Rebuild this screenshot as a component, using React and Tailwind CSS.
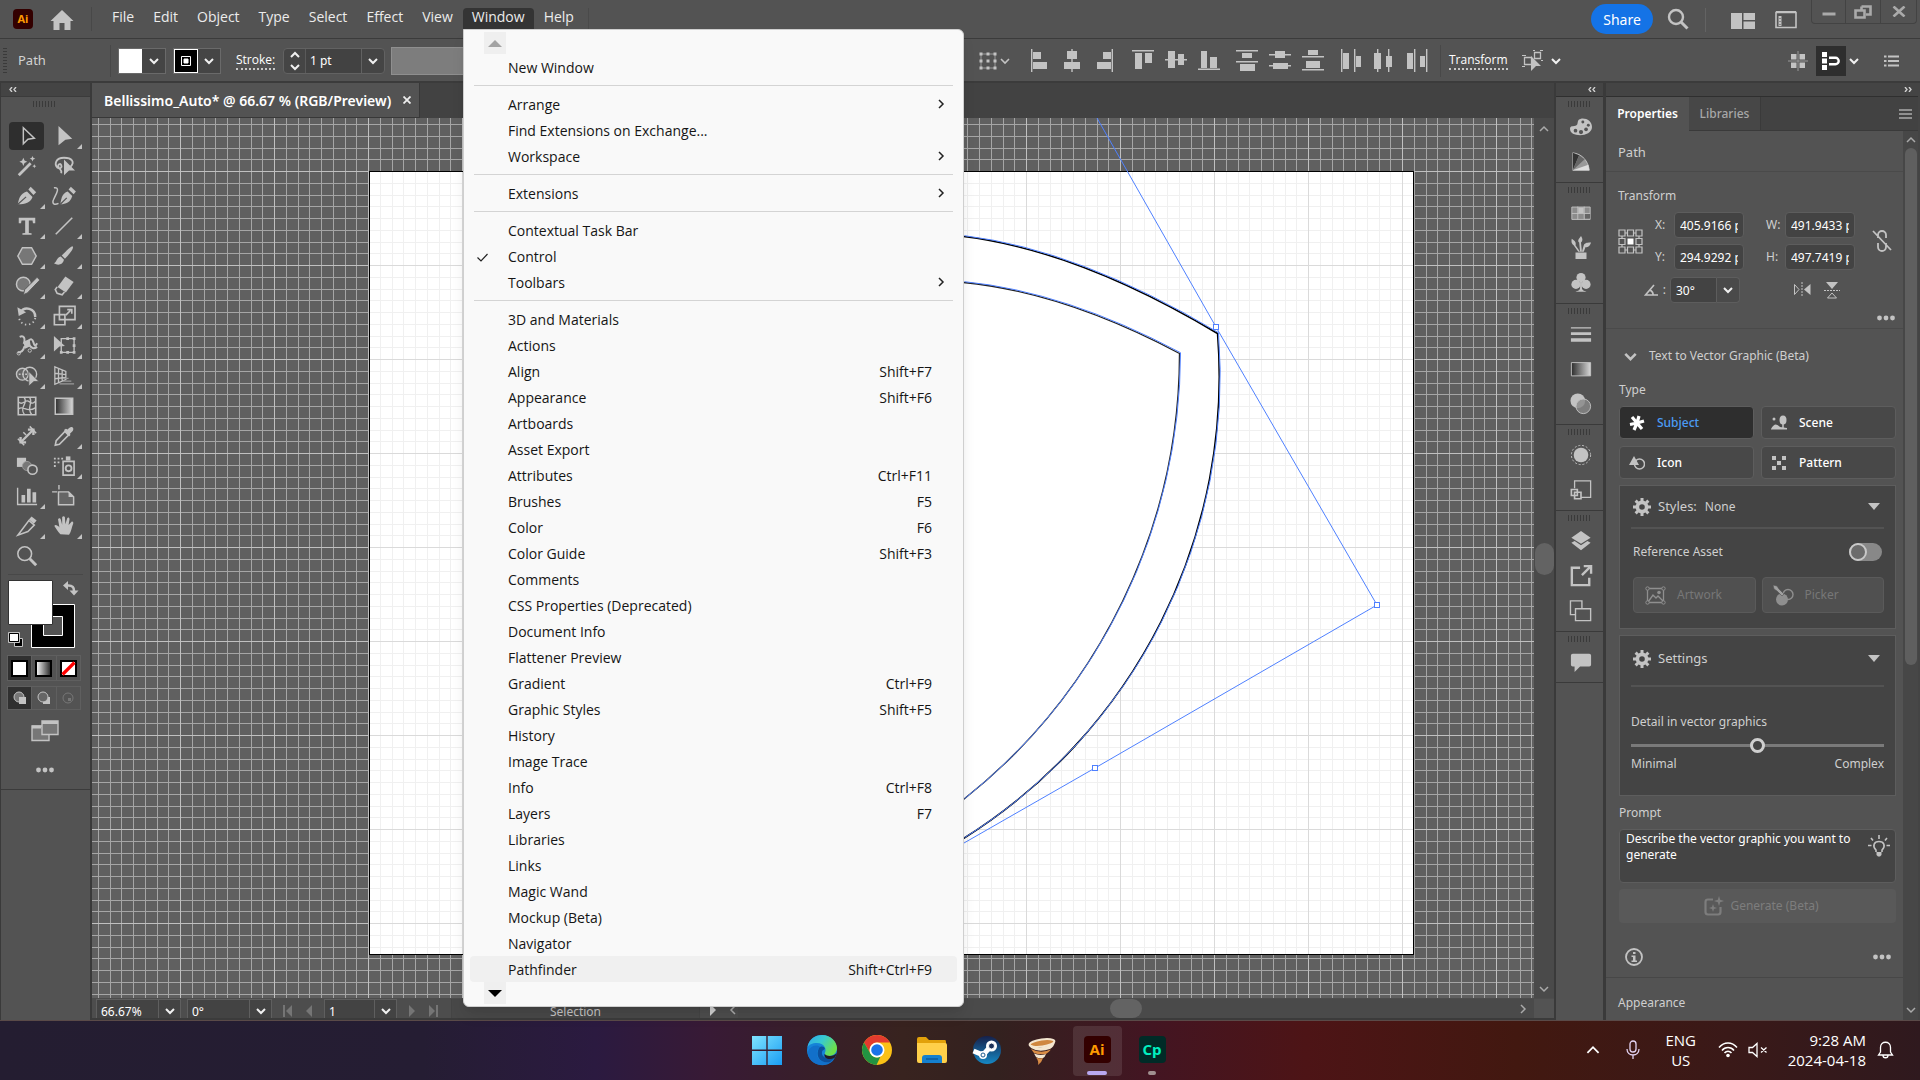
import React from "react";

const G = "#c3c3c3";

function Svg({ w = 24, h = w, vb, className = "", children, ...rest }) {
  return (
    <svg
      width={w}
      height={h}
      viewBox={vb || `0 0 ${w} ${h}`}
      fill="none"
      stroke="none"
      aria-hidden="true"
      className={`shrink-0 ${className}`}
      {...rest}
    >
      {children}
    </svg>
  );
}

function Chevron({ dir = "down", w = 10, color = "#f0f0f0", sw = 2 }) {
  const d = {
    down: "M1 3 L5 7 L9 3",
    up: "M1 7 L5 3 L9 7",
    right: "M3 1 L7 5 L3 9",
    left: "M7 1 L3 5 L7 9",
  }[dir];
  return (
    <Svg w={w} vb="0 0 10 10">
      <path d={d} stroke={color} strokeWidth={sw} />
    </Svg>
  );
}

function Dots({ className = "" }) {
  return (
    <Svg w={18} h={6} className={className}>
      <g fill={G}>
        <circle cx="2.5" cy="3" r="2.4" />
        <circle cx="9" cy="3" r="2.4" />
        <circle cx="15.5" cy="3" r="2.4" />
      </g>
    </Svg>
  );
}

function Grip() {
  return (
    <Svg w={24} h={6}>
      <path d="M1.5 0V6M4.5 0V6M7.5 0V6M10.5 0V6M13.5 0V6M16.5 0V6M19.5 0V6M22.5 0V6" stroke="#3a3a3a" />
    </Svg>
  );
}

function DoubleChevron({ right = false }) {
  return (
    <Svg w={8} h={5}>
      <path
        d={right ? "M1 0L3 2.5L1 5M5 0L7 2.5L5 5" : "M3 0L1 2.5L3 5M7 0L5 2.5L7 5"}
        stroke="#d0d0d0"
        strokeWidth="1.4"
      />
    </Svg>
  );
}

/* ---------- Title bar ---------- */

const MENUS = ["File", "Edit", "Object", "Type", "Select", "Effect", "View", "Window", "Help"];

function TitleBar() {
  return (
    <header className="flex h-[38px] shrink-0 items-stretch bg-[#535353]">
      <div className="flex items-center pl-[13px]">
        <div className="flex h-5 w-5 items-center justify-center rounded bg-[#330000] text-[11px] font-bold text-[#ff9a00]">
          Ai
        </div>
        <button aria-label="Home" className="ml-[17px]">
          <Svg w={24} h={22} className="mt-[2px]">
            <path d="M12 1 L23.5 12 H20.5 V21 H14.5 V14 H9.5 V21 H3.5 V12 H0.5Z" fill={G} />
          </Svg>
        </button>
        <div className="ml-[17px] h-6 w-px bg-[#484848]" />
      </div>
      <nav className="ml-[11px] flex items-stretch gap-px pt-2 pb-[9px]">
        {MENUS.map((m) => (
          <button
            key={m}
            className={
              m === "Window"
                ? "rounded-t bg-[#343434] px-[9px] pb-[3px] text-[14px] leading-4 text-[#ececec]"
                : "px-[9px] pb-[3px] text-[14px] leading-4 text-[#ececec]"
            }
          >
            {m}
          </button>
        ))}
        <div className="ml-[4px] w-px bg-[#4a4a4a]" />
      </nav>
      <div className="ml-auto flex">
        <button className="mt-1 h-[30px] w-[62px] rounded-full bg-[#1473e6] font-['Noto_Sans'] text-[14px] text-white">
          Share
        </button>
        <button aria-label="Search" className="ml-[14px]">
          <Svg w={22} vb="0 0 22 22">
            <circle cx="9" cy="9" r="7" stroke={G} strokeWidth="2.4" />
            <path d="M14 14 L20.5 20.5" stroke={G} strokeWidth="3" />
          </Svg>
        </button>
        <div className="mt-2 ml-[16px] h-6 w-px bg-[#636363]" />
        <button aria-label="Arrange documents" className="ml-[25px]">
          <Svg w={24} h={16} className="mt-[3px]">
            <path d="M0 0H11V16H0ZM12.5 0H24V7H12.5ZM12.5 8.5H24V16H12.5Z" fill={G} />
          </Svg>
        </button>
        <button aria-label="Workspace" className="ml-[20px]">
          <Svg w={22} h={18} className="mt-[2px]">
            <path d="M1 1.5H21V16.5H1Z" stroke={G} strokeWidth="1.6" />
            <path d="M1 1H21" stroke={G} strokeWidth="2" />
            <path d="M3 5H7V15H3Z" fill="#8a8a8a" />
            <path d="M5 5V15" stroke={G} strokeWidth="2" strokeDasharray="2 1" />
          </Svg>
        </button>
        <div className="mr-[3px] ml-[14px] flex h-6 rounded-b border border-t-0 border-[#434343]">
          <button aria-label="Minimize" className="flex w-[34px] items-center justify-center border-r border-[#434343] pt-1">
            <Svg w={14} h={4}>
              <path d="M0.5 0.5H13.5V3.5H0.5Z" fill="#aaa" />
            </Svg>
          </button>
          <button aria-label="Restore" className="flex w-[35px] items-center justify-center border-r border-[#434343]">
            <Svg w={18} h={14}>
              <path d="M7.5 1.5H16.5V9.5H12M1.5 5.5H10.5V12.5H1.5Z M7.5 1.5V5" stroke="#aaa" strokeWidth="2.6" />
            </Svg>
          </button>
          <button aria-label="Close" className="flex w-[35px] items-center justify-center">
            <Svg w={14} h={11}>
              <path d="M1.5 0.5L12.5 10.5M12.5 0.5L1.5 10.5" stroke="#aaa" strokeWidth="2.6" />
            </Svg>
          </button>
        </div>
      </div>
    </header>
  );
}

/* ---------- Control bar ---------- */

const ALIGN_ICONS = [
  ["Align left", "M1 0H2.4V23H1ZM3 3H11V10H3ZM3 13H17V20H3Z"],
  ["Align horizontal centre", "M8.3 0H9.7V23H8.3ZM4 2H14V10H4ZM1 13H17V20H1Z"],
  ["Align right", "M15.6 0H17V23H15.6ZM7 3H15V10H7ZM1 13H15V20H1Z"],
  ["Align top", "M-2 1H20V2.4H-2ZM1 4H8V20H1ZM11 4H18V14H11Z"],
  ["Align vertical centre", "M-2 10H20V11.4H-2ZM1 2H8V19H1ZM11 5H17V16H11Z"],
  ["Align bottom", "M-2 19.6H20V21H-2ZM1 2H7V19H1ZM10 8H17V19H10Z"],
  ["Distribute top", "M-2 1H20V2.4H-2ZM4 4H14V9H4ZM-2 12H20V13.4H-2ZM2 15H17V22H2Z"],
  ["Distribute vertical centre", "M-2 5H20V6.4H-2ZM4 2H14V9H4ZM-2 16H20V17.4H-2ZM2 14H17V20H2Z"],
  ["Distribute bottom", "M-2 7H20V8.4H-2ZM4 1H14V6H4ZM-2 20H20V21.4H-2ZM2 12H16V19H2Z"],
  ["Distribute left", "M0 0H1.4V23H0ZM2 4H8V20H2ZM13 0H14.4V23H13ZM15 7H20V18H15Z"],
  ["Distribute horizontal centre", "M3 0H4.4V23H3ZM0 4H7V20H0ZM14 0H15.4V23H14ZM12 7H18V18H12Z"],
  ["Distribute right", "M7 0H8.4V23H7ZM0 4H6V20H0ZM19 0H20.4V23H19ZM13 7H18V18H13Z"],
];

function ControlBar() {
  return (
    <div className="flex h-[44px] shrink-0 items-center border-y border-[#3b3b3b] bg-[#535353] pt-px text-[#e8e8e8]">
      <Svg w={4} h={26} className="ml-[3px]">
        <path d="M2 0V26" stroke="#3a3a3a" strokeWidth="4" strokeDasharray="1 2" />
      </Svg>
      <span className="ml-[11px] w-[92px] font-['Noto_Sans'] text-[13px] text-[#d2d2d2]">Path</span>
      <div className="h-8 w-px bg-[#484848]" />
      <div className="ml-[7px] flex h-[26px] w-[48px] border border-[#6a6a6a]">
        <button aria-label="Fill" className="w-[23px] bg-white" />
        <button aria-label="Fill options" className="flex flex-1 items-center justify-center bg-[#454545]">
          <Chevron />
        </button>
      </div>
      <div className="ml-[7px] flex h-[26px] w-[48px] border border-[#6a6a6a]">
        <button aria-label="Stroke colour" className="flex w-6 items-center justify-center border border-white bg-black">
          <Svg w={10}>
            <path d="M0.5 0.5H9.5V9.5H0.5ZM3 3H7V7H3Z" stroke="#fff" />
            <path d="M3 3H7V7H3Z" fill="#fff" />
          </Svg>
        </button>
        <button aria-label="Stroke options" className="flex flex-1 items-center justify-center bg-[#454545]">
          <Chevron />
        </button>
      </div>
      <label
        htmlFor="stroke"
        className="ml-[15px] w-[39px] border-b-2 border-dotted border-[#c8c8c8] text-[12px] leading-4 font-medium text-white"
      >
        Stroke:
      </label>
      <div className="ml-2 flex h-[26px] w-[102px] rounded-sm border border-[#626262] bg-[#454545]">
        <div className="flex w-[22px] flex-col items-center justify-center gap-0.5 border-r border-[#5a5a5a]">
          <Chevron dir="up" />
          <Chevron />
        </div>
        <input
          id="stroke"
          defaultValue="1 pt"
          className="w-[56px] border-r border-[#626262] bg-[#424242] pl-1 font-['Noto_Sans'] text-[12px] text-white outline-none"
        />
        <button aria-label="Stroke weights" className="flex flex-1 items-center justify-center">
          <Chevron />
        </button>
      </div>
      <div className="ml-[6px] h-[28px] w-[130px] border border-[#8f8f8f] bg-[#7d7d7d]" />
      <button aria-label="Shape properties" className="ml-[457px] flex items-center gap-0.5">
        <Svg w={20} h={20}>
          <path d="M3 3H17V17H3Z" stroke="#999" />
          <path d="M1.5 1.5h3v3h-3zM8.5 1.5h3v3h-3zM15.5 1.5h3v3h-3zM1.5 8.5h3v3h-3zM8.5 8.5h3v3h-3zM15.5 8.5h3v3h-3zM1.5 15.5h3v3h-3zM8.5 15.5h3v3h-3zM15.5 15.5h3v3h-3z" fill={G} />
        </Svg>
        <Chevron color={G} sw={1.6} />
      </button>
      <div className="ml-[20px] flex">
        {ALIGN_ICONS.map(([label, d], i) => (
          <button key={label} aria-label={label} className={i === 9 ? "ml-[19px]" : i % 3 === 0 && i > 0 ? "ml-[20px]" : i > 0 ? "ml-[15px]" : ""}>
            <Svg w={18} h={23} overflow="visible">
              <path d={d} fill={G} />
            </Svg>
          </button>
        ))}
      </div>
      <div className="ml-[15px] h-8 w-px bg-[#484848]" />
      <button className="ml-2 border-b-2 border-dotted border-[#c8c8c8] text-[12px] leading-4 font-medium text-white">
        Transform
      </button>
      <button aria-label="Select similar" className="ml-[14px] flex items-center gap-[7px]">
        <Svg w={22} h={22}>
          <path d="M2.5 7.5H9.5V14.5H2.5Z M12.5 2.5H18.5V8.5H12.5Z" stroke={G} strokeWidth="1.3" />
          <path d="M0 5.5h4M0 16.5h3M11 .5h2M18 .5h3M19 10.5h2" stroke={G} />
          <path d="M9 6L19 16L14 16L9 21Z" fill={G} />
        </Svg>
        <Chevron />
      </button>
      <div className="ml-auto flex items-center">
        <button aria-label="Snap to grid">
          <Svg w={20}>
            <path d="M3 3H8.5V8.5H3ZM11.5 3H17V8.5H11.5ZM3 11.5H8.5V17H3ZM11.5 11.5H17V17H11.5Z" fill={G} />
            <path d="M10 0V20M0 10H20" stroke="#999" />
          </Svg>
        </button>
        <button aria-label="Snap to point" className="ml-2 flex h-[30px] w-[30px] items-center justify-center bg-[#2e2e2e]">
          <Svg w={20} h={20}>
            <path d="M1 1H6V6H1ZM1 7.5H6V12.5H1ZM1 14H6V19H1Z" fill="#fff" />
            <path d="M8 6.8H14.5A3.2 3.2 0 0 1 14.5 13.2H8" stroke="#fff" strokeWidth="2.4" />
          </Svg>
        </button>
        <span className="ml-[3px]">
          <Chevron />
        </span>
        <button aria-label="Control menu" className="mr-[21px] ml-[25px]">
          <Svg w={15} h={12}>
            <path d="M4 1.5H15M4 6H15M4 10.5H15M0 1.5H2.5M0 6H2.5M0 10.5H2.5" stroke={G} strokeWidth="2" />
          </Svg>
        </button>
      </div>
    </div>
  );
}

/* ---------- Toolbar ---------- */

const TOOLS = [
  ["Selection", false, <path d="M8 3 L20 14.5 L13 15.5 L8 20.5Z" stroke={G} strokeWidth="1.6" />],
  ["Direct selection", true, <path d="M6 1 L21 15 L13.5 16 L6 22Z" fill={G} />],
  ["Magic wand", false, <><path d="M3 22L16 9" stroke={G} strokeWidth="3" /><path d="M8 3l1.3 3 3 1.3-3 1.3L8 12 6.700 8.600 3.700 7.300 6.700 6zM18 1l.9 2.100 2.100.9-2.100.9L18 7l-.9-2.100L15 4l2.100-.9zM20 10l.7 1.500 1.500.7-1.500.7L20 14.500l-.7-1.600-1.500-.7 1.500-.7z" fill={G} /></>],
  ["Lasso", false, <><path d="M5 14C1 10 3 3 12 3s12 5 7 10M5 14c3 2 5-1 4-3s-4-1-3 2 4 3 3 7" stroke={G} strokeWidth="2" /><path d="M12 5L24 17L17.500 17L12 22Z" fill={G} /></>],
  ["Pen", true, <><path d="M2 21C3 14 5 9 12 7L18 13C16 19 10 21 2 21Z" fill={G} /><path d="M13.500 5L16 2L22 8L19 11Z" fill={G} /><path d="M2 21L11 13" stroke="#535353" strokeWidth="1.3" /></>],
  ["Curvature", false, <><path d="M8 21C9 14 10 9 16 7L21 12C19 19 14 21 8 21Z" fill={G} /><path d="M17 5L19.500 2L25 7L22.500 10Z" fill={G} /><path d="M8 21L15 14" stroke="#535353" strokeWidth="1.3" /><path d="M1 3C8 2 4 9 1 15S2 22 6 20" stroke={G} strokeWidth="1.6" /></>],
  ["Type", true, <path d="M3 3H21V9H18.500L18 6H14V19.500L17 20V21.500H7V20L10 19.500V6H6L5.500 9H3Z" fill={G} />],
  ["Line segment", true, <path d="M3 21L21 3" stroke={G} strokeWidth="1.8" />],
  ["Polygon", true, <path d="M2 12L7 3H17L22 12L17 21H7Z" stroke={G} strokeWidth="1.600" fill="#777" />],
  ["Paintbrush", true, <><path d="M21.500 1.500C23 3 20 8 13 15L9.500 11.500C16 5 20 1 21.500 1.500Z" fill={G} /><path d="M8.500 12.500L12 16C11 21 6 23 1 20C4 19 4 13 8.500 12.500Z" fill={G} /></>],
  ["Shaper", true, <><circle cx="8" cy="10" r="7.500" stroke={G} strokeWidth="1.600" fill="#777" /><path d="M8 21.500L9.500 16L23 2.500L26 5.500L12.500 19.500Z" fill={G} stroke="#535353" strokeWidth="1" /></>],
  ["Eraser", true, <><path d="M13.500 1.500L22.500 7.500L14 19L5 13Z" fill={G} /><path d="M4.500 13L2.500 16L4.500 20L10 21.500L12.500 18.500" stroke={G} strokeWidth="1.800" /></>],
  ["Rotate", true, <><path d="M5 8C9 1 21 3 21 13" stroke={G} strokeWidth="2.600" /><path d="M1.500 2.500L3 12L11 8Z" fill={G} /><path d="M21 14C20 23 5 25 3 13" stroke={G} strokeWidth="2" strokeDasharray="1.500 3" /></>],
  ["Scale", true, <><path d="M7 1.500H24V16H7Z" stroke={G} strokeWidth="1.800" /><path d="M1.500 10.500H13V21.500H1.500Z" stroke={G} strokeWidth="1.800" /><path d="M14 11L19 6M15.500 5H20.500V9.500" stroke={G} strokeWidth="1.800" /></>],
  ["Width", true, <><path d="M4 2C9 0 10 4 9 8L14 6C16 4 18 4 19 8S21 13 23 9M2 19C6 19 8 17 9 13L14 11C17 14 19 16 23 13" stroke={G} strokeWidth="2.200" /><path d="M8 8L15 5.500L16 12L10 15Z" fill={G} /><circle cx="3" cy="20" r="1.800" stroke={G} /><circle cx="15" cy="17" r="1.800" stroke={G} /></>],
  ["Free transform", true, <><path d="M9 4H23V19H9Z" stroke={G} strokeWidth="1.500" /><path d="M14.500 2.500h3v3h-3zM21.500 2.500h3v3h-3zM21.500 10h3v3h-3zM21.500 17.500h3v3h-3zM14.500 17.500h3v3h-3zM7.500 17.500h3v3h-3z" fill={G} /><path d="M1 1L13 12L7 12.500L1 18Z" fill={G} /></>],
  ["Shape builder", true, <><circle cx="7" cy="10" r="6.500" stroke={G} strokeWidth="1.500" fill="#666" /><circle cx="15" cy="10" r="7.500" stroke={G} strokeWidth="1.500" /><path d="M3 10H17" stroke={G} strokeWidth="1.600" strokeDasharray="2 1.500" /><path d="M14 7L25 18L19.500 18L14 23Z" fill={G} stroke="#535353" strokeWidth=".8" /></>],
  ["Perspective grid", true, <><path d="M2 2L14 7V16L2 21Z M6 4V19M10 6V17M2 9L14 10.500M2 15L14 13.500" stroke={G} strokeWidth="1.400" /><path d="M11 14.500H17M11 17.500H20M7 20.500H23" stroke="#999" strokeWidth="1.400" /></>],
  ["Mesh", false, <><path d="M2.500 2.500H21.500V21.500H2.500Z" stroke={G} strokeWidth="1.800" /><path d="M3 8C8 12 10 4 14 7S19 9 21 7M3 15C8 11 12 20 21 14M9 3C14 9 3 13 9 21M15 3C19 9 11 14 17 21" stroke={G} strokeWidth="1.500" /></>],
  ["Gradient", false, <path d="M2.500 3.500H21.500V21H2.500Z" stroke={G} strokeWidth="1.600" fill="url(#toolGradient)" />],
  ["Measure", false, <><path d="M6 18L18 6" stroke={G} strokeWidth="2.600" /><path d="M13 5L19 5L19 11M5 13V19H11" stroke={G} strokeWidth="2.600" /><path d="M15 1.500L22 9M2 15L9 22M8 8L11 11" stroke={G} strokeWidth="1.600" /></>],
  ["Eyedropper", true, <><path d="M13 7L17 11L7 21L2.500 22L3.500 17Z" stroke={G} strokeWidth="1.800" /><path d="M12 5.500L14 4L16 5C19 0 24 2 21.500 6.500L18.500 9.500L19 11L17.500 12.500Z" fill={G} /></>],
  ["Blend", false, <><path d="M1 3H11V13H1Z" fill={G} /><circle cx="12" cy="12" r="5" fill="#777" stroke="#999" /><circle cx="18" cy="16" r="5" stroke={G} strokeWidth="1.800" fill="#535353" /></>],
  ["Symbol sprayer", true, <><path d="M11 7H23V22H11Z" stroke={G} strokeWidth="1.800" /><path d="M14 1.500H19V6H14Z" fill={G} /><circle cx="17" cy="14.500" r="3.200" stroke={G} strokeWidth="2" /><path d="M1 4H12M1 8H9M1 12H5" stroke={G} strokeWidth="2" strokeDasharray="2 2" /></>],
  ["Column graph", true, <path d="M1 3H2.500V20.500H23V22H1ZM6 11H10V19H6ZM12 4H16V19H12ZM18 8H22V19H18Z" fill={G} />],
  ["Artboard", false, <><path d="M6 7.500H17L22.500 13V21.500H6Z" stroke={G} strokeWidth="1.600" fill="#666" /><path d="M-1 7.500H4.500M6.500 0V5" stroke={G} strokeWidth="1.500" /><path d="M17 7.500V13H22.500Z" fill={G} /></>],
  ["Slice", true, <><path d="M2 22L14 6L20 11L13 18Z" stroke={G} strokeWidth="1.700" /><path d="M14 5L17 1.500L22.500 6L19.500 9.500Z" fill={G} /></>],
  ["Hand", true, <><path d="M8 21C5 18 3 14 1.500 12C2 10 5 11 7 13.500L5.500 4.500C6.500 3 8 3.500 8.500 5L10 10.500V2.500C10.500 1 12.500 1 13 2.500L13.500 10L15.500 3.500C16.500 2 18 3 18 4.500L17 11L20 7.500C21.500 6.500 22.500 8 22 9.500C20.500 13 20 18 17.500 21.500Z" fill={G} /></>],
  ["Zoom", false, <><circle cx="9.500" cy="9.500" r="7.500" stroke={G} strokeWidth="1.700" /><path d="M15 15L22 22" stroke={G} strokeWidth="3.200" /></>],
];

function Toolbar() {
  return (
    <aside className="flex w-[92px] shrink-0 flex-col border-x border-r-2 border-[#3a3a3a] bg-[#535353]">
      <div className="flex h-[14px] shrink-0 items-center border-b border-[#3b3b3b] bg-[#444] pl-2">
        <DoubleChevron />
      </div>
      <div className="flex h-[24px] shrink-0 justify-center pt-1 pr-1">
        <Grip />
      </div>
      <svg width="0" height="0" className="absolute" aria-hidden="true">
        <defs>
          <linearGradient id="toolGradient">
            <stop offset="0" stopColor="#2c2c2c" />
            <stop offset="1" stopColor="#d8d8d8" />
          </linearGradient>
        </defs>
      </svg>
      <div className="mx-[7px] grid grid-cols-2 border-b border-[#484848] pb-[3px]">
        {TOOLS.map(([label, more, art], i) => (
          <button key={label} aria-label={label} className="relative flex h-[30px] items-center justify-center">
            <span
              className={
                i === 0
                  ? "flex h-[28px] w-[35px] items-center justify-center rounded-sm bg-[#2e2e2e]"
                  : "flex h-[28px] w-[35px] items-center justify-center"
              }
            >
              <Svg w={22} vb="0 0 24 24" overflow="visible">
                {art}
              </Svg>
            </span>
            {more && (
              <Svg w={5} className="absolute right-[1px] bottom-[2px]">
                <path d="M5 0V5H0Z" fill={G} />
              </Svg>
            )}
          </button>
        ))}
      </div>
      <button aria-label="Fill and stroke" className="mx-[7px] mt-[5px]">
        <Svg w={74} h={68}>
          <path d="M23.500 24.500H66.500V67.500H23.500Z" fill="#000" stroke="#fff" />
          <path d="M35.500 36.500H54.500V55.500H35.500Z" fill="#535353" stroke="#fff" />
          <path d="M0.500 0.500H44.500V44.500H0.500Z" fill="#fff" stroke="#333" />
          <path d="M59 5.500C65 5 66 8 66 11" stroke={G} strokeWidth="2.500" />
          <path d="M60 1L55 5.500L60 10ZM61.500 10.500H70.500L66 15.500Z" fill={G} />
          <path d="M6.500 58.500H14.500V66.500H6.500Z" fill="#000" stroke={G} />
          <path d="M1.500 53.500H10.500V61.500H1.500Z" fill="#fff" stroke="#000" />
          <path d="M0.500 52.500H11.500V62.500H0.500Z" stroke={G} />
        </Svg>
      </button>
      <div className="ml-[6px] mt-[7px] flex h-[26px] w-[74px] border border-[#5f5f5f]">
        {["Color", "Gradient", "None"].map((t, i) => (
          <button
            key={t}
            aria-label={t}
            className={
              i === 0
                ? "flex flex-1 items-center justify-center bg-[#303030]"
                : "flex flex-1 items-center justify-center border-l border-[#5f5f5f]"
            }
          >
            <Svg w={17}>
              <path
                d="M1 1H16V16H1Z"
                fill={i === 1 ? "url(#fillGradient)" : "#fff"}
                stroke="#000"
                strokeWidth="2"
              />
              {i === 1 && (
                <defs>
                  <linearGradient id="fillGradient">
                    <stop offset="0" stopColor="#fff" />
                    <stop offset="1" stopColor="#222" />
                  </linearGradient>
                </defs>
              )}
              {i === 2 && <path d="M2.500 14.500L14.500 2.500" stroke="#f00" strokeWidth="3.200" />}
            </Svg>
          </button>
        ))}
      </div>
      <div className="ml-[6px] mt-[5px] flex h-6 w-[74px] border border-[#5f5f5f]">
        {["Draw normal", "Draw behind", "Draw inside"].map((t, i) => (
          <button
            key={t}
            aria-label={t}
            className={
              i === 0
                ? "flex flex-1 items-center justify-center bg-[#303030]"
                : "flex flex-1 items-center justify-center border-l border-[#5f5f5f]"
            }
          >
            <Svg w={16}>
              {i === 0 && <><circle cx="7" cy="7" r="5" stroke={G} fill="#777" /><path d="M7 7H14V14H7Z" fill={G} /></>}
              {i === 1 && <><path d="M7 7H14V14H7Z" fill={G} /><circle cx="7" cy="7" r="5" stroke={G} fill="#666" /></>}
              {i === 2 && <><circle cx="8" cy="8" r="5" stroke="#777" /><path d="M8 8H11V11H8Z" fill="#777" /></>}
            </Svg>
          </button>
        ))}
      </div>
      <button aria-label="Screen mode" className="mt-[10px] mr-px self-center">
        <Svg w={28} h={22}>
          <path d="M1 6H18V20.500H1Z" fill="#777" stroke={G} strokeWidth="1.400" />
          <path d="M11 1H27V14.500H11Z" fill="#777" stroke={G} strokeWidth="1.400" />
          <path d="M11 2.500H27M1 7H10" stroke={G} strokeWidth="3" />
        </Svg>
      </button>
      <button aria-label="Edit toolbar" className="flex justify-center pt-[25px] pr-0.5 pb-[16px]">
        <Dots />
      </button>
      <div className="border-t border-[#3b3b3b]" />
    </aside>
  );
}

/* ---------- Document ---------- */

const STEPS = [12, 24, 35, 47, 59, 71, 82];

function GridPattern({ id, minor, major }) {
  return (
    <pattern id={id} x="368" y="171" width="94" height="94" patternUnits="userSpaceOnUse">
      {STEPS.map((s) => (
        <g key={s} fill={minor}>
          <rect x={s} y="0" width="1" height="94" />
          <rect x="0" y={s} width="94" height="1" />
        </g>
      ))}
      <rect x="0" y="0" width="1" height="94" fill={major} />
      <rect x="0" y="0" width="94" height="1" fill={major} />
    </pattern>
  );
}

const OUTER = "M964 236Q1079 250 1218 333A545 545 0 0 1 964 838";
const INNER = "M964 282Q1065 292 1180 353A569 569 0 0 1 964 799";

function Canvas() {
  return (
    <div className="min-w-0 flex-1 overflow-hidden bg-[#606060]">
      <svg width="100%" height="100%" aria-label="Artboard" className="block">
        <defs>
          <GridPattern id="gridDark" minor="#a6a6a6" major="#c0c0c0" />
          <GridPattern id="gridLight" minor="#f0f0f0" major="#dadada" />
        </defs>
        <g transform="translate(-92 -118)">
          <rect x="92" y="118" width="3000" height="2000" fill="url(#gridDark)" />
          <rect x="369.500" y="171.500" width="1044" height="783" fill="#fff" stroke="#000" />
          <rect x="370" y="172" width="1043" height="782" fill="url(#gridLight)" />
          <path d={OUTER + "L700 838L700 236Z"} fill="#fff" />
          <g fill="none">
            <g transform="translate(-0.500 0.500)">
              <path d={OUTER} stroke="#000" strokeWidth="1.500" />
              <path d={INNER} stroke="#222" strokeWidth="1.300" />
            </g>
            <g transform="translate(0.500 -0.300)" stroke="#4f80ff">
              <path d={OUTER} />
              <path d={INNER} />
            </g>
            <path d="M1097 118L1216 327L1377 605L1095 768L964 843" stroke="#4f80ff" />
          </g>
          <g fill="#fff" stroke="#4f80ff">
            <rect x="1213.500" y="324.500" width="5" height="5" />
            <rect x="1374.500" y="602.500" width="5" height="5" />
            <rect x="1092.500" y="765.500" width="5" height="5" />
          </g>
        </g>
      </svg>
    </div>
  );
}

function StatusField({ label, value, inputClass }) {
  return (
    <div className="flex h-full items-center border border-b-0 border-[#5f5f5f] bg-[#434343]">
      <input aria-label={label} defaultValue={value} className={inputClass} />
      <button aria-label={`${label} options`} className="flex h-full w-[22px] items-center justify-center border-l border-[#5f5f5f] pt-1">
        <Chevron />
      </button>
    </div>
  );
}

function Tri({ flip = false, bar = false, color = "#757575" }) {
  return (
    <Svg w={12} h={12} className={flip ? "rotate-180" : ""}>
      <path d="M2 0L8 6L2 12Z" fill={color} />
      {bar && <path d="M10 0V12" stroke={color} strokeWidth="2" />}
    </Svg>
  );
}

function StatusBar() {
  return (
    <div className="flex h-[22px] shrink-0 items-center border-b-2 border-[#3b3b3b] bg-[#4d4d4d] pt-px pl-1 font-['Noto_Sans'] text-[12px] text-white">
      <StatusField label="Zoom" value="66.67%" inputClass="h-full w-[61px] pt-1 pl-1 outline-none" />
      <div className="ml-[6px] h-full">
        <StatusField label="Rotation" value="0°" inputClass="h-full w-[61px] pt-1 pl-1 outline-none" />
      </div>
      <div className="ml-[10px] flex w-[42px] gap-2 pt-1">
        <Tri flip bar />
        <Tri flip />
      </div>
      <StatusField label="Artboard" value="1" inputClass="h-full w-[49px] pt-1 pl-1 outline-none" />
      <div className="ml-[10px] flex gap-2 pt-1 pr-3">
        <Tri />
        <Tri bar />
      </div>
      <div className="flex h-full w-[249px] items-center justify-center border-x border-[#444] bg-[#484848] pt-1.5 text-[12px] text-[#c4c4c4]">
        Selection
      </div>
      <div className="ml-[8px] flex items-center gap-[8px] pt-0.5">
        <Tri color="#d0d0d0" />
        <Chevron dir="left" color="#aaa" sw={1.5} />
      </div>
      <div className="flex h-full flex-1 items-center bg-[#4a4a4a]">
        <div className="ml-[372px] h-[19px] w-8 rounded-full bg-[#636363]" />
        <span className="mr-[6px] ml-auto">
          <Chevron dir="right" color="#aaa" sw={1.5} />
        </span>
      </div>
      <div className="h-full w-5 bg-[#535353]" />
    </div>
  );
}

function DocumentArea() {
  return (
    <main className="flex min-w-0 flex-1 flex-col">
      <div className="flex h-[35px] shrink-0 bg-[#424242]">
        <div className="flex items-center border-r border-b border-[#383838] bg-[#535353] pr-2 pl-3">
          <span className="font-['Noto_Sans'] text-[14px] font-semibold text-white">
            Bellissimo_Auto* @ 66.67 % (RGB/Preview)
          </span>
          <button aria-label="Close document" className="ml-3">
            <Svg w={8}>
              <path d="M0.500 0.500L7.500 7.500M7.500 0.500L0.500 7.500" stroke="#eee" strokeWidth="1.800" />
            </Svg>
          </button>
        </div>
      </div>
      <div className="flex min-h-0 flex-1">
        <Canvas />
        <div className="flex w-[20px] shrink-0 flex-col items-center justify-between bg-[#4a4a4a] pt-[6px] pb-[4px]">
          <Chevron dir="up" color="#aaa" sw={1.5} />
          <div className="h-8 w-[19px] rounded-full bg-[#636363]" />
          <Chevron color="#aaa" sw={1.5} />
        </div>
      </div>
      <StatusBar />
    </main>
  );
}

/* ---------- Dock ---------- */

const DOCK = [
  [
    ["Color", <><path d="M12 3C18 2 24 6 24 12C24 18 17 21 11 21C5 21 0 19 0 14C0 9 6 13 8 9C9 6 8 4 12 3Z" fill={G} /><g fill="#535353"><circle cx="6" cy="16" r="2" /><circle cx="12" cy="17.500" r="2.300" /><circle cx="17.500" cy="14.500" r="2" /><circle cx="20" cy="10" r="1.600" /><circle cx="14" cy="6.500" r="1.600" /></g></>],
    ["Color guide", <><path d="M3 2C13 3 20 11 21 21H3Z" fill="#999" stroke={G} /><path d="M3 21V2L10 4.500Z" fill="#333" /><path d="M3 21L10 4.500L16 9Z" fill="#666" /><path d="M3 21L20 15L21 21Z" fill="#ddd" /></>],
  ],
  [
    ["Swatches", <><path d="M2 5.500H22V19H2Z" fill="#8c8c8c" stroke={G} /><path d="M9 6H15V12H9Z" fill={G} /><path d="M16 12.500H22V18H16Z" fill="#666" /><path d="M8.500 5V19M15.500 5V19M2 12.500H22" stroke={G} /></>],
    ["Brushes", <><path d="M6 17H18V24H6ZM9 16L4 9C2 8 1 5 2 2C5 4 7 6 6 9L11 16ZM11 16L10 6C7 4 11 1 12 -1C14 2 14 4 12 6L13 16ZM13 16L15 9C16 6 20 6 23 6C22 9 20 12 17 11L15 16Z" fill={G} /></>],
    ["Symbols", <><circle cx="12" cy="6" r="5" fill={G} /><circle cx="6.500" cy="13.500" r="5" fill={G} /><circle cx="17.500" cy="13.500" r="5" fill={G} /><path d="M11 8H13V17C13 20 15 20.500 18 21.500H6C9 20.500 11 20 11 17Z" fill={G} /></>],
  ],
  [
    ["Stroke", <path d="M1 4.500H23V6H1ZM1 10H23V13H1ZM1 16.500H23V20.500H1Z" fill={G} />],
    ["Gradient", <path d="M1.500 5H22.500V19.500H1.500Z" fill="url(#toolGradient)" stroke={G} />],
    ["Transparency", <><circle cx="8.500" cy="8.500" r="8" fill={G} /><circle cx="14.500" cy="14.500" r="8" fill="#888" fillOpacity=".8" stroke={G} /></>],
  ],
  [
    ["Appearance", <><circle cx="12" cy="12" r="8" fill={G} /><circle cx="12" cy="12" r="10.500" stroke={G} strokeDasharray="2.200 2" /></>],
    ["Graphic styles", <><path d="M5 10V2H22.500V20H12" stroke={G} strokeWidth="1.400" /><path d="M1.500 11.500H8V18H1.500ZM5 14.500H12V21.500H5Z" stroke={G} strokeWidth="1.800" /></>],
  ],
  [
    ["Layers", <path d="M12 1L22.500 8.500L12 15L1.500 8.500ZM1.500 14L5 12L12 16.500L19 12L22.500 14L12 22Z" fill={G} />],
    ["Asset export", <><path d="M11 3H2V22H21V14" stroke={G} strokeWidth="2.600" /><path d="M13 11L22 2M15 1.200H23V9.500" stroke={G} strokeWidth="2.600" /></>],
    ["Artboards", <><path d="M0.500 1H13V16H0.500Z" stroke={G} strokeWidth="1.500" /><path d="M6 9.500H22.500V22.500H6Z" stroke={G} strokeWidth="1.500" fill="#535353" /></>],
  ],
  [["Comments", <path d="M3 3H21Q23 3 23 5V15Q23 17 21 17H11L5 23V17H3Q1 17 1 15V5Q1 3 3 3Z" fill={G} />]],
];

function Dock() {
  return (
    <aside className="flex w-[52px] shrink-0 flex-col border-r-[3px] border-l-2 border-[#3a3a3a] bg-[#535353]">
      <div className="flex h-[14px] shrink-0 items-center justify-end border-b border-[#2f2f2f] bg-[#444] pr-[7px]">
        <DoubleChevron />
      </div>
      {DOCK.map((group, i) => (
        <div key={i} className="border-b border-[#3a3a3a] pb-[3px] pl-[3px]">
          <div className="flex h-3 justify-center pt-1 pr-1">
            <Grip />
          </div>
          {group.map(([label, art]) => (
            <button key={label} aria-label={label} className="flex h-[35px] w-full items-center justify-center">
              <Svg w={22} vb="0 0 24 24" overflow="visible">
                {art}
              </Svg>
            </button>
          ))}
        </div>
      ))}
    </aside>
  );
}

/* ---------- Properties ---------- */

function NumField({ id, label, value }) {
  return (
    <div className="flex items-center">
      <label htmlFor={id} className="w-[19px] text-[12px] text-[#cfcfcf]">
        {label}
      </label>
      <input
        id={id}
        defaultValue={value}
        className="h-[26px] w-[70px] rounded-sm border border-[#5d5d5d] bg-[#434343] px-[5px] text-[12px] text-white outline-none"
      />
    </div>
  );
}

function Gear() {
  return (
    <Svg w={18} vb="0 0 18 18">
      <circle cx="9" cy="9" r="4.600" stroke={G} strokeWidth="3.600" />
      <path d="M9 0V4M9 14V18M0 9H4M14 9H18M2.600 2.600L5 5M13 13L15.400 15.400M15.400 2.600L13 5M5 13L2.600 15.400" stroke={G} strokeWidth="3" />
    </Svg>
  );
}

function TypeButton({ label, icon, active }) {
  return (
    <button
      className={
        active
          ? "flex h-[33px] items-center gap-3 rounded-sm border border-[#5d5d5d] bg-[#2e2e2e] pl-[9px] text-[12px] font-medium text-[#4b9cf5]"
          : "flex h-[33px] items-center gap-3 rounded-sm border border-[#5d5d5d] bg-[#484848] pl-[9px] text-[12px] font-medium text-white"
      }
    >
      <Svg w={16}>{icon}</Svg>
      {label}
    </button>
  );
}

function DropTri() {
  return (
    <Svg w={12} h={7}>
      <path d="M0 0H12L6 7Z" fill={G} />
    </Svg>
  );
}

function PropertiesPanel() {
  return (
    <aside className="flex w-[314px] shrink-0 flex-col border-r-2 border-[#444] bg-[#535353] font-['Noto_Sans'] text-[12px] text-[#cfcfcf]">
      <div className="flex h-[14px] shrink-0 items-center justify-end border-b border-[#2f2f2f] bg-[#444] pr-[6px]">
        <DoubleChevron right />
      </div>
      <div className="flex h-[34px] shrink-0 bg-[#424242]" role="tablist">
        <button role="tab" className="w-[83px] bg-[#535353] text-[12px] font-semibold text-white">
          Properties
        </button>
        <button role="tab" className="w-[72px] border-r border-b border-[#3a3a3a] bg-[#474747] text-[12px] font-medium text-[#a8a8a8]">
          Libraries
        </button>
        <div className="flex flex-1 items-center justify-end border-b border-[#3a3a3a] pr-[6px]">
          <button aria-label="Panel menu">
            <Svg w={13} h={10}>
              <path d="M0 1H13M0 5H13M0 9H13" stroke="#aaa" strokeWidth="1.600" />
            </Svg>
          </button>
        </div>
      </div>
      <div className="flex min-h-0 flex-1">
        <div className="flex min-w-0 flex-1 flex-col overflow-hidden">
          <div className="flex h-[41px] shrink-0 items-center border-b border-[#4a4a4a] pt-1 pl-[12px] text-[13px]">Path</div>
          <section className="h-[157px] shrink-0 border-b border-[#4a4a4a] pt-[14px] pr-[8px] pl-[12px]">
            <h2 className="text-[12px] leading-5">Transform</h2>
            <div className="mt-[6px] flex">
              <div className="flex w-[37px] items-center">
                <Svg w={25}>
                  <path d="M1 1H7V7H1ZM9.500 1H15.500V7H9.500ZM18 1H24V7H18ZM1 9.500H7V15.500H1ZM18 9.500H24V15.500H18ZM1 18H7V24H1ZM9.500 18H15.500V24H9.500ZM18 18H24V24H18ZM7 4H9.500M15.500 4H18M7 21H9.500M15.500 21H18M4 7V9.500M4 15.500V18M21 7V9.500M21 15.500V18" stroke={G} strokeWidth="1.200" />
                  <path d="M9.500 9.500H15.500V15.500H9.500Z" fill="#fff" />
                </Svg>
              </div>
              <div className="grid grid-cols-2 gap-x-[22px] gap-y-[6px]">
                <NumField id="px" label="X:" value="405.9166 px" />
                <NumField id="pw" label="W:" value="491.9433 px" />
                <NumField id="py" label="Y:" value="294.9292 px" />
                <NumField id="ph" label="H:" value="497.7419 px" />
              </div>
              <button aria-label="Link width and height" className="ml-auto pr-[3px]">
                <Svg w={20} h={22}>
                  <path d="M6 8V5A4 4 0 0 1 14 5V8M14 13V17A4 4 0 0 1 6 17V13M1 1L19 20" stroke={G} strokeWidth="1.800" />
                </Svg>
              </button>
            </div>
            <div className="mt-[7px] flex items-center">
              <label htmlFor="angle" className="flex w-[52px] items-center justify-end gap-1 pr-1 text-[12px]">
                <Svg w={15} h={12}>
                  <path d="M14 11H1.500L10 1M6 6Q9.500 8 9 11" stroke={G} strokeWidth="1.600" />
                </Svg>
                :
              </label>
              <input
                id="angle"
                defaultValue="30°"
                className="h-[26px] w-[47px] rounded-l-sm border border-[#5d5d5d] bg-[#434343] px-[5px] text-[12px] text-white outline-none"
              />
              <button aria-label="Angle options" className="flex h-[26px] w-[23px] items-center justify-center rounded-r-sm border border-l-0 border-[#5d5d5d] bg-[#4a4a4a]">
                <Chevron />
              </button>
              <button aria-label="Flip horizontally" className="ml-[53px]">
                <Svg w={18} h={16}>
                  <path d="M1.500 2.500L6 7.500L1.500 12.500Z" stroke={G} />
                  <path d="M17.500 2L11 7.500L17.500 13Z" fill={G} />
                  <path d="M9 0V15" stroke={G} strokeDasharray="2 1" />
                </Svg>
              </button>
              <button aria-label="Flip vertically" className="ml-[13px]">
                <Svg w={16} h={17}>
                  <path d="M2 0H14L8 7Z" fill={G} />
                  <path d="M3.500 16L8 11L12.500 16Z" stroke={G} />
                  <path d="M0 8.500H16" stroke={G} strokeDasharray="2 1" />
                </Svg>
              </button>
            </div>
            <div className="mt-3 flex justify-end">
              <button aria-label="More transform options">
                <Dots />
              </button>
            </div>
          </section>
          <section className="flex shrink-0 flex-col pt-[17px] pr-[7px] pl-[13px]">
            <button className="flex items-center gap-[12px] pl-[5px] text-[12px] leading-5">
              <Chevron w={13} color={G} />
              Text to Vector Graphic (Beta)
            </button>
            <h3 className="mt-[14px] text-[12px] leading-5">Type</h3>
            <div className="mt-[6px] grid grid-cols-2 gap-x-[7px] gap-y-[7px]">
              <TypeButton
                active
                label="Subject"
                icon={<path d="M8 8L10 1M8 8L3 2M8 8L15 6M8 8L1 9.500M8 8L5 15M8 8L13 14" stroke="#fff" strokeWidth="3.200" />}
              />
              <TypeButton
                label="Scene"
                icon={<><path d="M0 14Q4 6 9 12L16 13V14.500H0Z" fill={G} /><ellipse cx="12" cy="5" rx="3.500" ry="4.500" fill={G} /><path d="M12 8V13" stroke={G} strokeWidth="1.500" /><circle cx="3" cy="4" r="1.500" fill={G} /></>}
              />
              <TypeButton
                label="Icon"
                icon={<><path d="M5 1L10 10H0Z" fill={G} /><circle cx="10.500" cy="9" r="5" stroke={G} strokeWidth="1.500" /></>}
              />
              <TypeButton label="Pattern" icon={<path d="M1 1h4v4h-4zM11 1h4v4h-4zM6 6h4v4h-4zM1 11h4v4h-4zM11 11h4v4h-4z" fill={G} />} />
            </div>
            <div className="mt-[6px] h-[144px] border border-[#5d5d5d] bg-[#444] px-[11px]">
              <div className="flex h-[43px] items-center border-b-2 border-[#535353] pr-1 pl-0.5">
                <Gear />
                <span className="ml-[7px] text-[13px]">Styles:</span>
                <span className="ml-2 text-[12px]">None</span>
                <button aria-label="Styles options" className="ml-auto">
                  <DropTri />
                </button>
              </div>
              <div className="mt-[13px] flex items-center justify-between pr-[2px] pl-[2px]">
                <label htmlFor="refasset" className="text-[12px] leading-5">
                  Reference Asset
                </label>
                <input
                  id="refasset"
                  type="checkbox"
                  role="switch"
                  className="flex h-[18px] w-[33px] appearance-none rounded-full bg-[#888] before:block before:h-[18px] before:w-[18px] before:rounded-full before:border-2 before:border-[#c8c8c8] before:bg-[#6b6b6b] before:content-['']"
                />
              </div>
              <div className="mt-[15px] ml-[2px] grid grid-cols-2 gap-x-[6px]">
                <button disabled className="flex h-[36px] items-center gap-[11px] rounded-sm border border-[#5a5a5a] bg-[#505050] pl-[11px] text-[12px] text-[#777]">
                  <Svg w={21} h={19}>
                    <path d="M2.500 2.500H18.500V16.500H2.500ZM3 16L8 9L11 12L13 10L18 15" stroke="#8f8f8f" strokeWidth="1.300" />
                    <g fill="#505050" stroke="#8f8f8f"><circle cx="2.500" cy="2.500" r="1.700" /><circle cx="18.500" cy="2.500" r="1.700" /><circle cx="2.500" cy="16.500" r="1.700" /><circle cx="18.500" cy="16.500" r="1.700" /></g>
                    <circle cx="14" cy="6.500" r="1.800" fill="#8f8f8f" />
                  </Svg>
                  Artwork
                </button>
                <button disabled className="flex h-[36px] items-center gap-[11px] rounded-sm border border-[#5a5a5a] bg-[#505050] pl-[10px] text-[12px] text-[#777]">
                  <Svg w={21} h={21}>
                    <circle cx="9" cy="14.500" r="6" fill="#8f8f8f" />
                    <circle cx="15" cy="9.500" r="5" stroke="#8f8f8f" strokeWidth="1.400" />
                    <path d="M0 0L4 1L6 4L11 9L9 11L4 6L1 4Z" fill="#a0a0a0" stroke="#505050" strokeWidth=".6" />
                  </Svg>
                  Picker
                </button>
              </div>
            </div>
            <div className="mt-[6px] h-[161px] border border-[#5d5d5d] bg-[#444] px-[11px]">
              <div className="flex h-[51px] items-center border-b-2 border-[#535353] pr-1 pb-1 pl-0.5">
                <Gear />
                <span className="ml-[7px] text-[13px]">Settings</span>
                <button aria-label="Settings options" className="ml-auto">
                  <DropTri />
                </button>
              </div>
              <label htmlFor="detail" className="mt-[25px] block text-[12px] leading-5">
                Detail in vector graphics
              </label>
              <input
                id="detail"
                type="range"
                defaultValue="50"
                className="mt-[5px] block h-4 w-full appearance-none bg-transparent [&::-webkit-slider-runnable-track]:h-[3px] [&::-webkit-slider-runnable-track]:bg-[#7a7a7a] [&::-webkit-slider-thumb]:-mt-[6px] [&::-webkit-slider-thumb]:h-[15px] [&::-webkit-slider-thumb]:w-[15px] [&::-webkit-slider-thumb]:appearance-none [&::-webkit-slider-thumb]:rounded-full [&::-webkit-slider-thumb]:border-[3px] [&::-webkit-slider-thumb]:border-[#cfcfcf] [&::-webkit-slider-thumb]:bg-[#444]"
              />
              <div className="mt-px flex justify-between text-[12px] leading-5">
                <span>Minimal</span>
                <span>Complex</span>
              </div>
            </div>
            <label htmlFor="prompt" className="mt-[7px] block text-[12px] leading-5">
              Prompt
            </label>
            <div className="mt-[6px] flex h-[54px] rounded-sm border border-[#5d5d5d] bg-[#444] pl-[6px]">
              <textarea
                id="prompt"
                placeholder="Describe the vector graphic you want to generate"
                className="min-w-0 flex-1 resize-none pt-px text-[12px] leading-4 text-white outline-none placeholder:text-white placeholder:opacity-100"
              />
              <button aria-label="Prompt ideas" className="flex w-[32px] justify-center pt-[5px]">
                <Svg w={22} h={22}>
                  <path d="M8 17V15C4 11 6 6.500 11 6.500S18 11 14 15V17" stroke={G} strokeWidth="1.600" />
                  <path d="M8.500 17H13.500V20L12 21.500H10L8.500 20Z" fill={G} />
                  <path d="M11 0V4M3 3L5 5.500M19 3L17 5.500M0 10.500H3.500M18.500 10.500H22" stroke={G} strokeWidth="1.600" />
                </Svg>
              </button>
            </div>
            <button disabled className="mt-[6px] flex h-[34px] items-center justify-center gap-[6px] rounded-sm bg-[#595959] pl-2 text-[12px] text-[#7d7d7d]">
              <Svg w={20} h={20}>
                <path d="M9 3.500H4Q1.500 3.500 1.500 6V16Q1.500 18.500 4 18.500H14Q16.500 18.500 16.500 16V11" stroke="#7d7d7d" strokeWidth="2.200" />
                <path d="M15 0L16.200 3.800L20 5L16.200 6.200L15 10L13.800 6.200L10 5L13.800 3.800ZM9 8L10 11L13 12L10 13L9 16L8 13L5 12L8 11Z" fill="#7d7d7d" />
              </Svg>
              Generate (Beta)
            </button>
            <div className="flex h-[53px] items-center justify-between pt-[14px] pr-[5px] pl-[6px]">
              <button aria-label="Information">
                <Svg w={18}>
                  <circle cx="9" cy="9" r="8" stroke={G} strokeWidth="1.800" />
                  <path d="M8 4H10.500V6H8ZM6.500 7.500H10.500V12.500H12V14H6.500V12.500H8V9H6.500Z" fill={G} />
                </Svg>
              </button>
              <button aria-label="More options">
                <Dots />
              </button>
            </div>
          </section>
          <div className="mt-px border-t border-[#474747] pt-[15px] pl-[12px] text-[12px] leading-5">Appearance</div>
        </div>
        <div className="flex w-[15px] shrink-0 flex-col items-center justify-between bg-[#474747] pt-1 pb-[5px]">
          <div className="flex w-full flex-col items-center gap-[3px]">
            <Chevron dir="up" color="#aaa" sw={1.500} />
            <div className="h-[517px] w-[12px] rounded-full bg-[#5f5f5f]" />
          </div>
          <Chevron color="#aaa" sw={1.500} />
        </div>
      </div>
    </aside>
  );
}

/* ---------- Window menu ---------- */

const MENU_ITEMS = [
  { t: "New Window" },
  null,
  { t: "Arrange", sub: true },
  { t: "Find Extensions on Exchange..." },
  { t: "Workspace", sub: true },
  null,
  { t: "Extensions", sub: true },
  null,
  { t: "Contextual Task Bar" },
  { t: "Control", check: true },
  { t: "Toolbars", sub: true },
  null,
  { t: "3D and Materials" },
  { t: "Actions" },
  { t: "Align", k: "Shift+F7" },
  { t: "Appearance", k: "Shift+F6" },
  { t: "Artboards" },
  { t: "Asset Export" },
  { t: "Attributes", k: "Ctrl+F11" },
  { t: "Brushes", k: "F5" },
  { t: "Color", k: "F6" },
  { t: "Color Guide", k: "Shift+F3" },
  { t: "Comments" },
  { t: "CSS Properties (Deprecated)" },
  { t: "Document Info" },
  { t: "Flattener Preview" },
  { t: "Gradient", k: "Ctrl+F9" },
  { t: "Graphic Styles", k: "Shift+F5" },
  { t: "History" },
  { t: "Image Trace" },
  { t: "Info", k: "Ctrl+F8" },
  { t: "Layers", k: "F7" },
  { t: "Libraries" },
  { t: "Links" },
  { t: "Magic Wand" },
  { t: "Mockup (Beta)" },
  { t: "Navigator" },
  { t: "Pathfinder", k: "Shift+Ctrl+F9", hover: true },
];

function WindowMenu() {
  return (
    <div
      role="menu"
      className="absolute top-[29px] left-[463px] flex w-[501px] flex-col rounded-b-md rounded-tr-md border border-[#cfcfcf] bg-[#f9f9f9] px-[6px] pt-[2px] pb-[2px] text-[#151515] shadow-lg"
    >
      <div className="ml-[14px] flex h-[22px] w-[22px] items-center justify-center bg-[#efefef]">
        <Svg w={14} h={7}>
          <path d="M0 7H14L7 0Z" fill="#a3a3a3" />
        </Svg>
      </div>
      {MENU_ITEMS.map((it, i) =>
        it === null ? (
          <div key={i} className="mx-1 my-[5px] h-px bg-[#d4d4d4]" />
        ) : (
          <button
            key={i}
            role="menuitem"
            className={
              it.hover
                ? "flex h-[26px] items-center rounded bg-[#f0f0f0] pt-0.5 text-left text-[14px] leading-5"
                : "flex h-[26px] items-center pt-0.5 text-left text-[14px] leading-5"
            }
          >
            <span className="flex w-[38px] shrink-0 pl-[7px]">
              {it.check && (
                <Svg w={11} h={9}>
                  <path d="M0.500 4.500L4 8L10.500 1" stroke="#222" strokeWidth="1.200" />
                </Svg>
              )}
            </span>
            <span className="flex-1">{it.t}</span>
            {it.k && <span className="pr-[25px]">{it.k}</span>}
            {it.sub && (
              <span className="pr-[11px] pb-0.5">
                <Chevron dir="right" color="#222" sw={1.500} />
              </span>
            )}
          </button>
        ),
      )}
      <div className="ml-[14px] flex h-[22px] w-[22px] items-center justify-center bg-[#efefef]">
        <Svg w={14} h={7}>
          <path d="M0 0H14L7 7Z" fill="#000" />
        </Svg>
      </div>
    </div>
  );
}

/* ---------- Taskbar ---------- */

function AppTile({ label, children }) {
  return (
    <button aria-label={label} className="flex h-full w-[55px] items-center justify-center pb-0.5">
      <Svg w={32} vb="0 0 32 32">
        {children}
      </Svg>
    </button>
  );
}

function Taskbar() {
  return (
    <footer className="flex h-[60px] shrink-0 items-center border-t border-[#5a4a48] bg-[linear-gradient(90deg,#241d31_0%,#251d33_22%,#2b1a40_31%,#381a35_37%,#38231f_47%,#33211f_52%,#431522_60%,#4d1416_68%,#421810_79%,#3a1918_90%,#2f191e_100%)] text-white">
      <div className="flex-1" />
      <div className="ml-[25px] flex h-full items-center">
        <AppTile label="Start">
          <defs>
            <linearGradient id="win" x1="0" y1="0" x2="1" y2="1">
              <stop offset="0" stopColor="#7fe4ff" />
              <stop offset="1" stopColor="#1a9df4" />
            </linearGradient>
          </defs>
          <path d="M1 2H15.300V15.500H1ZM16.700 2H31V15.500H16.700ZM1 17H15.300V31H1ZM16.700 17H31V31H16.700Z" fill="url(#win)" />
        </AppTile>
        <AppTile label="Edge">
          <defs>
            <linearGradient id="edgeA" x1="0" y1="0" x2="1" y2="0.500">
              <stop offset="0" stopColor="#2fa8ec" />
              <stop offset="0.500" stopColor="#38c9d0" />
              <stop offset="1" stopColor="#6de04a" />
            </linearGradient>
          </defs>
          <circle cx="16" cy="16" r="15" fill="#1583d8" />
          <path d="M1.500 13C3 5 9 1 16 1C25 1 31 8 31 14C31 19 27 22 23 22C19 22 18.500 20 19 18.500C21 15 18 9 11 9C6 9 3 11 1.500 13Z" fill="url(#edgeA)" />
          <path d="M14 13C9 17 10 27 19 28C24 28 27 26 28.500 24C24 35 4 33 2 20C1 14 10 9 14 13Z" fill="#1270ca" />
          <path d="M13 14C9 22 14 30 24 28L28.500 24C23 26 15 24 16 18C16 16 18 16 19 15C18 12 15 12 13 14Z" fill="#0c4f9c" />
          <path d="M18.500 20C17.500 25 24 26.500 29 23.500L31 19C27 23 21 22.500 18.500 20Z" fill="#241c28" />
        </AppTile>
        <AppTile label="Chrome">
          <circle cx="16" cy="16" r="15" fill="#fbc116" />
          <path d="M3 8.500A15 15 0 0 1 29 8.500H16A7.500 7.500 0 0 0 9.500 19.700Z" fill="#e33b2e" />
          <path d="M3 8.500L9.500 19.700A7.500 7.500 0 0 0 19.500 22.600L15.500 31A15 15 0 0 1 3 8.500Z" fill="#229342" />
          <circle cx="16" cy="16" r="7.500" fill="#fff" />
          <circle cx="16" cy="16" r="5.800" fill="#1a73e8" />
        </AppTile>
        <AppTile label="File Explorer">
          <path d="M1 5Q1 3 3 3H10L13 6H29Q30 6 30 8V14H1Z" fill="#e2a10a" />
          <path d="M1 9H29Q31 9 31 11V27Q31 29 29 29H3Q1 29 1 27Z" fill="#ffd04a" />
          <path d="M6 29V24Q6 21 9 21H23Q26 21 26 24V29Z" fill="#1580cf" />
          <path d="M10 25H22" stroke="#0c5a9c" strokeWidth="1.500" />
        </AppTile>
        <AppTile label="Steam">
          <defs>
            <linearGradient id="steam" x1="0" y1="0" x2="0" y2="1">
              <stop offset="0" stopColor="#16204a" />
              <stop offset="1" stopColor="#1688c4" />
            </linearGradient>
          </defs>
          <circle cx="16" cy="16" r="14" fill="url(#steam)" />
          <path d="M2.500 17L12 21L20 12" stroke="#fff" strokeWidth="5" fill="none" />
          <circle cx="20.500" cy="12" r="5.500" fill="#fff" />
          <circle cx="20.500" cy="12" r="3" fill="#1d3158" stroke="#fff" />
          <circle cx="12" cy="21" r="4" fill="#fff" />
          <circle cx="12" cy="21" r="2" stroke="#1d5c90" fill="none" />
        </AppTile>
        <AppTile label="Tornado">
          <ellipse cx="16" cy="9" rx="12.500" ry="3.500" fill="#cf8740" stroke="#f4e6d0" strokeWidth="2" transform="rotate(-8 16 9)" />
          <path d="M3 11Q15 17 29 8Q28 13 24 15Q13 19 5 14Z" fill="#f4e6d0" />
          <path d="M5 15Q15 20 25 15.500Q23 18 20 20Q13 21 8 19Z" fill="#d98c45" />
          <path d="M8 19.500Q14 22 20 20Q19 23 17 24Q13 25 10 23Z" fill="#f4e6d0" />
          <path d="M10 23.500Q14 25 17 24Q16 28 12 31Q13 27 10 23.500Z" fill="#d98c45" />
        </AppTile>
        <button aria-label="Illustrator" className="mx-[3px] flex h-[50px] w-[49px] flex-col items-center rounded bg-white/10 pt-[10px]">
          <span className="flex h-[27px] w-[27px] items-center justify-center rounded bg-[#330000] text-[15px] font-bold text-[#ff9a00]">
            Ai
          </span>
          <span className="mt-2 h-1 w-5 rounded-full bg-[#b9a8f0]" />
        </button>
        <button aria-label="Captivate" className="mx-[3px] flex h-[50px] w-[49px] flex-col items-center pt-[10px]">
          <span className="flex h-[27px] w-[27px] items-center justify-center rounded bg-[#002b27] text-[15px] font-bold text-[#00f0c0]">
            Cp
          </span>
          <span className="mt-2 h-1 w-2 rounded-full bg-[#a09090]" />
        </button>
      </div>
      <div className="flex flex-1 items-center justify-end pr-[26px] pb-0.5">
        <button aria-label="Show hidden icons">
          <Chevron dir="up" w={14} color="#fff" sw={1.300} />
        </button>
        <button aria-label="Microphone" className="ml-[25px]">
          <Svg w={16} h={20}>
            <rect x="5" y="1" width="6" height="11" rx="3" stroke="#e4d4f4" strokeWidth="1.300" />
            <path d="M2 9C2 17 14 17 14 9M8 15V19" stroke="#e4d4f4" strokeWidth="1.300" />
          </Svg>
        </button>
        <div className="ml-[22px] w-[36px] text-center text-[15px] leading-5">
          ENG
          <br />
          US
        </div>
        <button aria-label="Network and volume" className="ml-[19px] flex items-center gap-[10px]">
          <Svg w={20} h={17}>
            <path d="M1 6.500C6 0.500 14 0.500 19 6.500M4 9.500C7 5.500 13 5.500 16 9.500M6.500 12C8.500 9.500 11.500 9.500 13.500 12" stroke="#fff" strokeWidth="1.500" />
            <circle cx="10" cy="14.500" r="1.800" fill="#fff" />
          </Svg>
          <Svg w={20} h={16}>
            <path d="M1 5.500H4.500L9 1.500V14.500L4.500 10.500H1ZM13 5.500L18.500 10.500M18.500 5.500L13 10.500" stroke="#fff" strokeWidth="1.300" />
          </Svg>
        </button>
        <div className="ml-[20px] text-right text-[15px] leading-5">
          9:28 AM
          <br />
          2024-04-18
        </div>
        <button aria-label="Notifications" className="ml-[11px]">
          <Svg w={17} h={18}>
            <path d="M1.500 14H15.500L13.500 11V6.500C13.500 -0.500 3.500 -0.500 3.500 6.500V11ZM6 14.500C6 17.500 11 17.500 11 14.500" stroke="#fff" strokeWidth="1.300" />
          </Svg>
        </button>
      </div>
    </footer>
  );
}

export default function App() {
  return (
    <div className="relative flex h-screen flex-col overflow-hidden bg-[#535353] font-['Open_Sans','Noto_Sans',sans-serif]">
      <TitleBar />
      <ControlBar />
      <div className="flex min-h-0 flex-1 border-t border-[#3b3b3b]">
        <Toolbar />
        <DocumentArea />
        <Dock />
        <PropertiesPanel />
      </div>
      <Taskbar />
      <WindowMenu />
    </div>
  );
}
